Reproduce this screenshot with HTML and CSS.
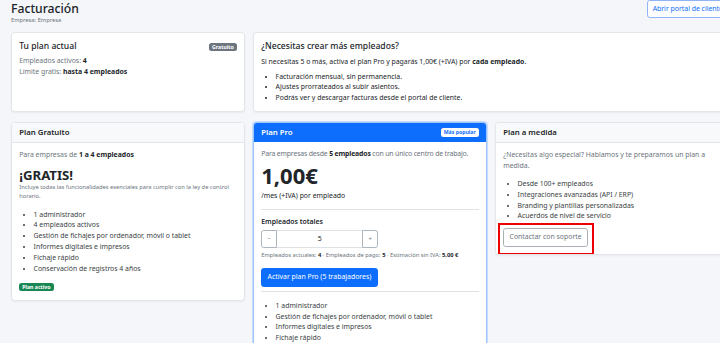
FILE: index.html
```html
<!DOCTYPE html>
<html lang="es">
<head>
  <meta charset="UTF-8">
  <meta name="viewport" content="width=device-width, initial-scale=1.0">
  <title>Facturación</title>
  <link rel="stylesheet" href="styles.css">
</head>
<body>
  <div class="page">
    <header class="page-head">
      <div>
        <h1>Facturación</h1>
        <div class="muted tiny">Empresa: Empresa</div>
      </div>
      <button class="btn btn-outline-primary">Abrir portal de cliente</button>
    </header>

    <div class="grid">
      <div class="card">
        <div class="card-body">
          <div class="title-row">
            <h5 class="card-title">Tu plan actual</h5>
            <span class="badge badge-gray">Gratuito</span>
          </div>
          <p class="muted">Empleados activos: <b class="dark">4</b></p>
          <p class="muted">Límite gratis: <b class="dark">hasta 4 empleados</b></p>
        </div>
      </div>

      <div class="card span-2">
        <div class="card-body">
          <h5 class="card-title">¿Necesitas crear más empleados?</h5>
          <p class="lead-line">Si necesitas 5 o más, activa el plan Pro y pagarás 1,00€ (+IVA) por <b>cada empleado</b>.</p>
          <ul>
            <li>Facturación mensual, sin permanencia.</li>
            <li>Ajustes prorrateados al subir asientos.</li>
            <li>Podrás ver y descargar facturas desde el portal de cliente.</li>
          </ul>
        </div>
      </div>
    </div>

    <div class="grid plans">
      <div class="card">
        <div class="card-header">Plan Gratuito</div>
        <div class="card-body">
          <p class="muted intro">Para empresas de <b class="dark">1 a 4 empleados</b></p>
          <h2 class="free">¡GRATIS!</h2>
          <p class="muted tiny note">Incluye todas las funcionalidades esenciales para cumplir con la ley de control horario.</p>
          <ul class="features">
            <li>1 administrador</li>
            <li>4 empleados activos</li>
            <li>Gestión de fichajes por ordenador, móvil o tablet</li>
            <li>Informes digitales e impresos</li>
            <li>Fichaje rápido</li>
            <li>Conservación de registros 4 años</li>
          </ul>
          <span class="badge badge-green">Plan activo</span>
        </div>
      </div>

      <div class="card card-pro">
        <div class="card-header">
          <span>Plan Pro</span>
          <span class="badge badge-white">Más popular</span>
        </div>
        <div class="card-body">
          <p class="muted intro">Para empresas desde <b class="dark">5 empleados</b> con un único centro de trabajo.</p>
          <div class="price">1,00€</div>
          <p class="per">/mes (+IVA) por empleado</p>
          <hr class="hr-top">
          <label class="field-label">Empleados totales</label>
          <div class="stepper">
            <button class="step">−</button>
            <input type="text" value="5">
            <button class="step">+</button>
          </div>
          <p class="muted tiny estimate">Empleados actuales: <b class="dark">4</b> · Empleados de pago: <b class="dark">5</b> · Estimación sin IVA: <b class="dark">5,00 €</b></p>
          <button class="btn btn-primary">Activar plan Pro (5 trabajadores)</button>
          <hr class="hr-bottom">
          <ul class="features">
            <li>1 administrador</li>
            <li>Gestión de fichajes por ordenador, móvil o tablet</li>
            <li>Informes digitales e impresos</li>
            <li>Fichaje rápido</li>
            <li>Conservación de registros 4 años</li>
          </ul>
        </div>
      </div>

      <div class="card">
        <div class="card-header">Plan a medida</div>
        <div class="card-body">
          <p class="muted intro">¿Necesitas algo especial? Hablamos y te preparamos un plan a medida.</p>
          <ul class="features custom-list">
            <li>Desde 100+ empleados</li>
            <li>Integraciones avanzadas (API / ERP)</li>
            <li>Branding y plantillas personalizadas</li>
            <li>Acuerdos de nivel de servicio</li>
          </ul>
          <div class="highlight">
            <button class="btn btn-outline-secondary">Contactar con soporte</button>
          </div>
        </div>
      </div>
    </div>
  </div>
</body>
</html>
```

FILE: styles.css
```css
html, body {
  overflow: hidden;
}

body {
  margin: 0;
  background: #f5f6f9;
  color: #212529;
  font-family: 'Noto Sans', 'Open Sans', sans-serif;
  font-size: 6.9px;
  line-height: 10.8px;
}

.page {
  width: 718px;
  padding: 0 11px;
}

p {
  margin: 0;
}

b {
  font-weight: 700;
}

.muted {
  color: #6c757d;
}

.dark {
  color: #212529;
}

.tiny {
  font-size: 5.75px;
  line-height: 9.2px;
}

.page-head {
  display: flex;
  justify-content: space-between;
  align-items: flex-start;
  margin-bottom: 7px;
}

.page-head h1 {
  margin: 1px 0 0;
  font-size: 12.2px;
  font-weight: 500;
  line-height: 15px;
}

.btn {
  font-family: inherit;
  font-size: 6.9px;
  line-height: 10.8px;
  padding: 2.5px 5px;
  border-radius: 2.7px;
  border: 1px solid transparent;
  background: none;
  cursor: pointer;
}

.btn-outline-primary {
  color: #0d6efd;
  border-color: #8fb5f7;
  background: #fff;
}

.btn-primary {
  color: #fff;
  background: #0d6efd;
  border-color: #0d6efd;
  padding: 3px 5.4px;
}

.btn-outline-secondary {
  display: block;
  color: #6c757d;
  border-color: #a9afb5;
  background: #fff;
  padding: 3px 5.4px;
}

.grid {
  display: grid;
  grid-template-columns: repeat(3, 1fr);
  gap: 8px;
}

.span-2 {
  grid-column: span 2;
}

.plans {
  margin-top: 10px;
  align-items: start;
}

.card {
  background: #fff;
  border: 1px solid #e2e5e9;
  border-radius: 3.6px;
  box-shadow: 0 1px 2px rgba(0, 0, 0, 0.05);
  overflow: hidden;
}

.card-body {
  padding: 7.2px;
}

.grid:first-of-type .card-body {
  padding-top: 8px;
}

.card-title {
  margin: 0 0 4.5px;
  font-size: 8.6px;
  font-weight: 500;
  line-height: 11px;
}

.title-row {
  display: flex;
  justify-content: space-between;
  align-items: center;
  margin-bottom: 3.6px;
}

.title-row .card-title {
  margin: 0;
}

.lead-line {
  margin-bottom: 4px;
}

ul {
  margin: 0;
  padding-left: 14.4px;
}

.card-header {
  display: flex;
  justify-content: space-between;
  align-items: center;
  padding: 4px 7.2px;
  font-size: 7.8px;
  line-height: 11px;
  font-weight: 600;
  background: #f8f9fa;
  border-bottom: 1px solid #e2e5e9;
}

.badge {
  display: inline-block;
  padding: 1px 3px;
  font-size: 5.2px;
  font-weight: 700;
  line-height: 1.2;
  border-radius: 2.5px;
}

.badge-gray {
  background: #6c757d;
  color: #fff;
}

.badge-green {
  background: #198754;
  color: #fff;
}

.badge-white {
  background: #fff;
  color: #0d6efd;
}

.intro {
  margin-bottom: 7.2px;
}

.free {
  margin: 0;
  font-size: 13.2px;
  font-weight: 700;
  line-height: 15px;
}

.note {
  margin-bottom: 8px;
}

.features {
  color: #3a3f44;
  margin-bottom: 7.2px;
}

.custom-list {
  margin-bottom: 6px;
}

.card-pro {
  border: 1px solid #9ec5fe;
  box-shadow: 0 0 0 1px #c6dcfd;
}

.card-pro .card-header {
  background: #0d6efd;
  color: #fff;
  border-bottom: none;
}

.card-pro .intro {
  letter-spacing: -0.16px;
}

.price {
  font-size: 22px;
  font-weight: 700;
  line-height: 24px;
  margin-top: -4px;
}

.per {
  margin-top: 4px;
}

hr {
  border: none;
  border-top: 1px solid #dfe2e5;
}

.hr-top {
  margin: 7px 0;
}

.hr-bottom {
  margin: 4px 0 9px;
}

.field-label {
  display: block;
  font-weight: 600;
  margin-bottom: 2px;
}

.stepper {
  display: flex;
  width: 117px;
  height: 18px;
}

.step {
  width: 16px;
  border: 1px solid #adb5bd;
  background: #fff;
  color: #6c757d;
  font-family: inherit;
  font-size: 6px;
  padding: 0;
}

.step:first-child {
  border-radius: 2.7px 0 0 2.7px;
}

.step:last-child {
  border-radius: 0 2.7px 2.7px 0;
}

.stepper input {
  flex: 1;
  min-width: 0;
  border: 1px solid #dee2e6;
  border-left: none;
  border-right: none;
  text-align: center;
  font-family: inherit;
  font-size: 6.9px;
  color: #212529;
  padding: 0;
}

.estimate {
  margin: 3px 0 8px;
}

.highlight {
  position: relative;
  width: fit-content;
}

.highlight::after {
  content: '';
  position: absolute;
  top: -5px;
  left: -5px;
  right: -6px;
  bottom: -8px;
  border: 2px solid #ee0000;
}
```
